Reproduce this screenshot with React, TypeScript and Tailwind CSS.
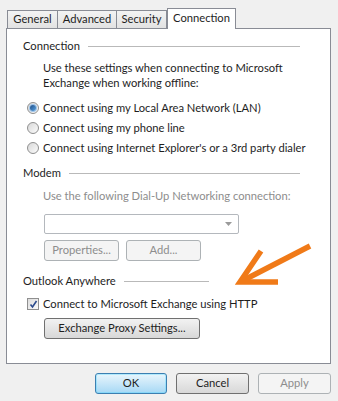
import React from 'react';

const font = { fontFamily: 'Lato, "Noto Sans", sans-serif' };

function Radio({ checked }: { checked?: boolean }) {
  return (
    <span className="relative w-[12px] h-[12px] rounded-full border border-[#8f8f8f] bg-gradient-to-br from-[#d8d8d8] to-[#fbfbfb] flex items-center justify-center shrink-0">
      {checked && (
        <span className="w-[6px] h-[6px] rounded-full bg-gradient-to-br from-[#1e4f8a] to-[#5aa2e0] ring-1 ring-[#9cc4ea]" />
      )}
    </span>
  );
}

function Checkbox() {
  return (
    <span className="w-[12px] h-[12px] border border-[#8f8f8f] bg-gradient-to-br from-[#dcdcdc] to-[#fafafa] flex items-center justify-center shrink-0">
      <svg width="9" height="9" viewBox="0 0 9 9">
        <path d="M1.5 4.5 L3.5 7 L7.5 1" stroke="#2b4a8c" strokeWidth="1.6" fill="none" />
      </svg>
    </span>
  );
}

function SectionHeader({ label }: { label: string }) {
  return (
    <div className="flex items-center h-[16px] pl-[16px] pr-[30px] gap-[8px] whitespace-nowrap">
      <span>{label}</span>
      <span className="flex-1 h-px bg-[#b9b9b9]" />
    </div>
  );
}

function Btn({ children, w, disabled, primary }: { children: React.ReactNode; w: string; disabled?: boolean; primary?: boolean }) {
  const base = 'h-[21px] rounded-[3px] border flex items-center justify-center whitespace-nowrap';
  let cls = 'border-[#707070] bg-gradient-to-b from-[#f2f2f2] to-[#d8d8d8] text-[#1e1e1e]';
  if (disabled) cls = 'border-[#adb2b5] bg-[#f4f4f4] text-[#8d8d8d]';
  if (primary) cls = 'border-[#3c7fb1] bg-gradient-to-b from-[#e8f5fc] to-[#a7d9f5] text-[#1e1e1e] shadow-[inset_0_0_0_1px_#48d4ff55]';
  return <div className={`${base} ${cls} ${w}`}>{children}</div>;
}

export default function App() {
  return (
    <div className="w-[338px] h-[401px] bg-[#f0f0f0] text-[11.2px] text-[#1e1e1e] relative overflow-hidden whitespace-nowrap" style={font}>
      {/* Tabs */}
      <div className="flex items-end pt-[7px] pl-[7px] h-[28px]">
        <div className="w-[51px] h-[18px] border border-[#898c95] border-b-0 bg-gradient-to-b from-[#f3f3f3] to-[#e2e2e2] flex items-center justify-center">General</div>
        <div className="w-[59px] h-[18px] border border-[#898c95] border-b-0 border-l-0 bg-gradient-to-b from-[#f3f3f3] to-[#e2e2e2] flex items-center justify-center">Advanced</div>
        <div className="w-[50px] h-[18px] border border-[#898c95] border-b-0 border-l-0 bg-gradient-to-b from-[#f3f3f3] to-[#e2e2e2] flex items-center justify-center">Security</div>
        <div className="w-[69px] h-[21px] border border-[#898c95] border-b-0 bg-white flex items-center justify-center relative z-10 -mb-px pb-[2px]">Connection</div>
      </div>

      {/* Panel */}
      <div className="ml-[6px] w-[325px] h-[336px] border border-[#898c95] bg-white flex flex-col pt-[9px]">
        <SectionHeader label="Connection" />
        <div className="pl-[36px] mt-[6px] leading-[15px]">
          <div>Use these settings when connecting to Microsoft</div>
          <div>Exchange when working offline:</div>
        </div>
        <div className="mt-[8px] pl-[20px] flex flex-col">
          <div className="h-[20px] flex items-center gap-[4px]"><Radio checked /><span>Connect using my Local Area Network (LAN)</span></div>
          <div className="h-[20px] flex items-center gap-[4px]"><Radio /><span>Connect using my phone line</span></div>
          <div className="h-[20px] flex items-center gap-[4px]"><Radio /><span>Connect using Internet Explorer's or a 3rd party dialer</span></div>
        </div>

        <div className="mt-[7px]"><SectionHeader label="Modem" /></div>
        <div className="pl-[36px] mt-[7px] leading-[15px] text-[#8d8d8d]">Use the following Dial-Up Networking connection:</div>
        <div className="ml-[37px] mt-[11px] w-[195px] h-[20px] border border-[#b4b8bd] rounded-[2px] bg-white flex items-center justify-end pr-[6px]">
          <svg width="7" height="4" viewBox="0 0 7 4"><path d="M0 0 L7 0 L3.5 4 Z" fill="#9a9a9a" /></svg>
        </div>
        <div className="ml-[37px] mt-[6px] flex gap-[7px]">
          <Btn w="w-[75px]" disabled>Properties...</Btn>
          <Btn w="w-[75px]" disabled>Add...</Btn>
        </div>

        <div className="mt-[12px] w-[232px]"><SectionHeader label="Outlook Anywhere" /></div>
        <div className="mt-[7px] pl-[20px] h-[16px] flex items-center gap-[4px]"><Checkbox /><span>Connect to Microsoft Exchange using HTTP</span></div>
        <div className="ml-[37px] mt-[6px]">
          <Btn w="w-[156px]">Exchange Proxy Settings...</Btn>
        </div>
      </div>

      {/* Bottom buttons */}
      <div className="flex justify-end gap-[9px] pr-[7px] mt-[9px]">
        <Btn w="w-[72px]" primary>OK</Btn>
        <Btn w="w-[73px]">Cancel</Btn>
        <Btn w="w-[73px]" disabled>Apply</Btn>
      </div>

      {/* Annotation arrow */}
      <svg className="absolute left-0 top-0 pointer-events-none" width="338" height="401">
        <g stroke="#f07a18" strokeWidth="5.5" fill="none" strokeLinecap="butt">
          <path d="M310 246 L244 280" />
          <path d="M261 251 L240 282 L278 282" strokeLinejoin="miter" />
        </g>
      </svg>
    </div>
  );
}
